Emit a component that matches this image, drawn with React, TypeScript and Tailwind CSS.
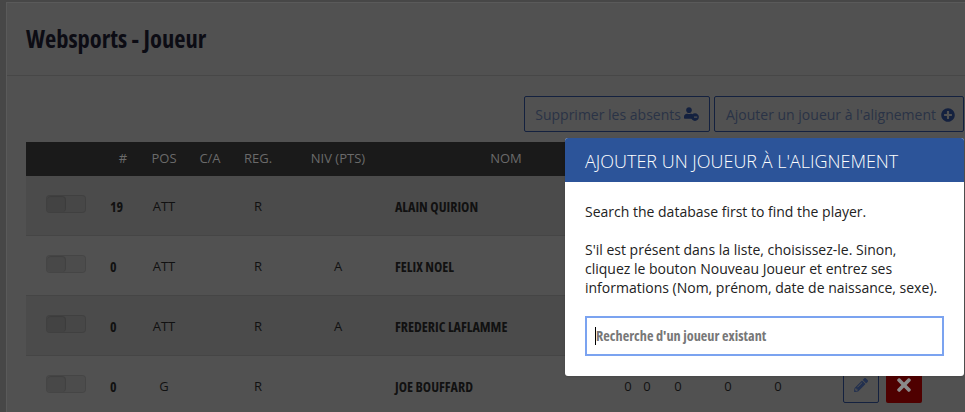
import { FaPlusCircle, FaPencilAlt, FaTimes, FaUser, FaMinusCircle } from 'react-icons/fa';

const players = [
  { num: '19', pos: 'ATT', reg: 'R', niv: '', name: 'ALAIN QUIRION', striped: true, actions: false },
  { num: '0', pos: 'ATT', reg: 'R', niv: 'A', name: 'FELIX NOEL', striped: false, actions: false },
  { num: '0', pos: 'ATT', reg: 'R', niv: 'A', name: 'FREDERIC LAFLAMME', striped: true, actions: false },
  { num: '0', pos: 'G', reg: 'R', niv: '', name: 'JOE BOUFFARD', striped: false, actions: true },
];

const gridCols =
  'grid grid-cols-[79px_36px_46px_46px_50px_110px_226px_18px_20px_42px_58px_42px_146px] items-center';

function Toggle() {
  return (
    <div className="ml-5 -mt-1.5 flex h-[18px] w-10 rounded-sm border border-black/10 bg-black/5">
      <div className="w-[19px] rounded-sm border-r border-black/10 bg-black/5 shadow-[inset_0_1px_1px_rgba(0,0,0,0.12)]" />
      <div className="flex-1" />
    </div>
  );
}

export default function App() {
  return (
    <div className="relative h-[412px] w-[965px] overflow-hidden bg-[#474747] font-['Open_Sans',sans-serif] text-[#111]">
      <div className="ml-1.5 mt-0.5 h-full border-t border-l border-[#5a5a5a] bg-[#515151]">
        <div className="flex h-[73px] items-center border-b border-[#474747] pl-[19px]">
          <h1 className="text-[24.5px] font-bold text-[#0c0c14] [font-stretch:75%]">Websports - Joueur</h1>
        </div>

        <div className="flex justify-end gap-1 pt-5 pr-px pb-2.5">
          <button className="flex h-9 items-center gap-[3px] rounded-[2px] border border-[#14213f] pt-0.5 pr-2.5 pl-[10px] text-sm text-[#2a3346]">
            Supprimer les absents
            <span className="relative h-4 w-[15px] text-[#14213f]">
              <FaUser className="absolute left-0 top-0 h-3 w-2.5" />
              <FaMinusCircle className="absolute bottom-0.5 right-0 h-2 w-2" />
            </span>
          </button>
          <button className="flex h-9 items-center gap-[5px] rounded-[2px] border border-[#14213f] pt-0.5 pr-2 pl-[11px] text-sm text-[#2a3346]">
            Ajouter un joueur à l'alignement
            <FaPlusCircle className="h-3.5 w-3.5 text-[#14213f]" />
          </button>
        </div>

        <div className="ml-[19px] w-[919px] text-[13px]">
          <div className={`${gridCols} h-[34px] bg-[#1a1a1a] text-center text-[#6a6a6a]`}>
            <div />
            <div>#</div>
            <div>POS</div>
            <div>C/A</div>
            <div>REG.</div>
            <div>NIV (PTS)</div>
            <div>NOM</div>
          </div>
          {players.map((p) => (
            <div
              key={p.name}
              className={`${gridCols} h-[60px] border-b border-[#454545] pt-0.5 text-center ${p.striped ? 'bg-[#4b4b4b]' : ''}`}
            >
              <Toggle />
              <div className="pl-[5px] text-left text-sm font-bold [font-stretch:75%]">{p.num}</div>
              <div>{p.pos}</div>
              <div />
              <div>{p.reg}</div>
              <div>{p.niv}</div>
              <div className="pl-0.5 text-left text-sm font-bold [font-stretch:75%]">{p.name}</div>
              {p.actions && (
                <>
                  <div>0</div>
                  <div>0</div>
                  <div>0</div>
                  <div>0</div>
                  <div>0</div>
                  <div className="flex gap-[7px] pb-1 pl-11">
                    <button className="flex h-9 w-9 items-center justify-center rounded-[2px] border border-[#14213f] text-[#22304f]">
                      <FaPencilAlt className="h-3.5 w-3.5" />
                    </button>
                    <button className="flex h-9 w-9 items-center justify-center rounded-[2px] bg-[#4f0000] text-[#8a8a8a]">
                      <FaTimes className="h-5 w-5" />
                    </button>
                  </div>
                </>
              )}
            </div>
          ))}
        </div>
      </div>

      <div className="absolute left-[565px] top-[138px] w-[399px] overflow-hidden rounded-[3px] bg-white shadow-sm">
        <div className="flex h-11 items-center bg-[#2c5499] pt-0.5 pl-5 text-[18px] font-light text-white">
          AJOUTER UN JOUEUR À L'ALIGNEMENT
        </div>
        <div className="h-[194px] px-5 pt-5 text-sm leading-[19px] text-[#222]">
          <p>Search the database first to find the player.</p>
          <p className="mt-[19px]">
            S'il est présent dans la liste, choisissez-le. Sinon,
            <br />
            cliquez le bouton Nouveau Joueur et entrez ses
            <br />
            informations (Nom, prénom, date de naissance, sexe).
          </p>
          <div className="mt-[19px] flex h-10 items-center border-2 border-[#7ba3f0] pl-2 text-[14.25px] font-bold text-[#777] [font-stretch:75%]">
            <span className="h-[18px] border-l border-black leading-[18px]">Recherche d'un joueur existant</span>
          </div>
        </div>
      </div>
    </div>
  );
}
